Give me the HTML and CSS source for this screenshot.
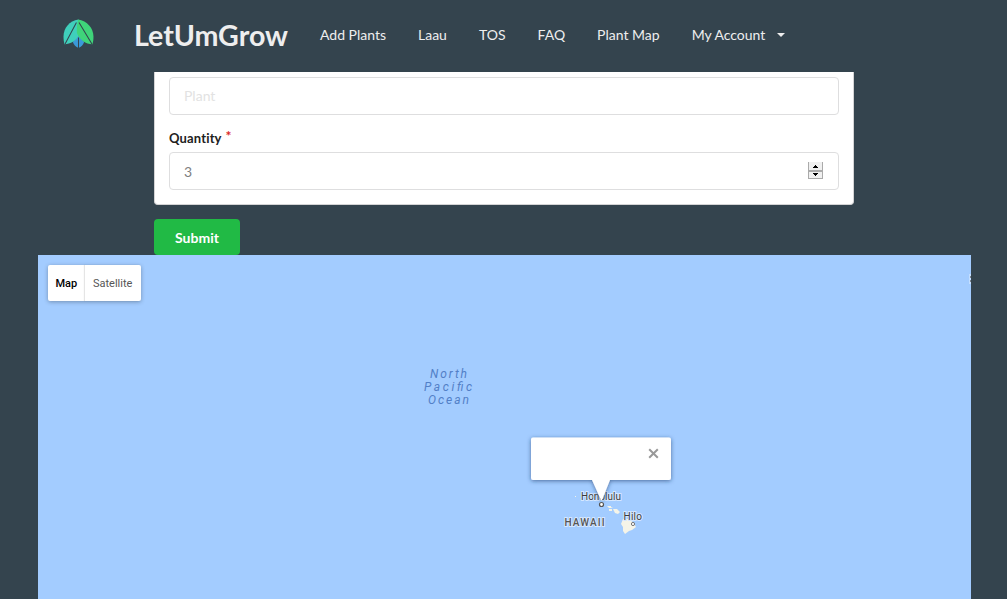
FILE: index.html
```html
<!DOCTYPE html>
<html lang="en">
<head>
<meta charset="utf-8">
<title>LetUmGrow</title>
<link rel="stylesheet" href="styles.css">
</head>
<body>
<header class="navbar">
  <svg class="logo" width="31" height="30" viewBox="0 0 30 30" preserveAspectRatio="none">
    <path fill="#3b99d8" d="M15 16 9.500 23c1 3 3 5 5.500 6 2.500-1 4.500-3 5.500-6z"/>
    <path fill="#3fcfbb" d="M15 .5C6 2 .5 9 .5 17.500c0 3 .3 5.500 1 7.800C7 25 13 22 16 15z"/>
    <path fill="#3fd47a" d="M14.500.5C23.500 2 29.500 9 29.500 17.500c0 3-.3 5.500-1 7.800C22 25 16 21 13.500 14c-.5-5 .5-9 1-13.500z"/>
    <path fill="none" stroke="#34444e" stroke-width="1" d="M13 3.500 2 25M15.500 3.500 28 25M15 18.500V29"/>
  </svg>
  <h1 class="brand">LetUmGrow</h1>
  <nav class="links">
    <a>Add Plants</a>
    <a>Laau</a>
    <a>TOS</a>
    <a>FAQ</a>
    <a>Plant Map</a>
    <a class="account">My Account <span class="caret"></span></a>
  </nav>
</header>
<main>
  <form class="form">
    <div class="segment">
      <div class="field placeholder">Plant</div>
      <div class="label">Quantity <span class="star">*</span></div>
      <div class="field quantity"><span>3</span>
        <svg class="spinner" width="15" height="17" viewBox="0 0 15 17" shape-rendering="crispEdges">
          <path fill="#f0f0f0" d="M0 0h15v17H0z"/>
          <path fill="#aaa" d="M0 0h1v17H0zM14 0h1v17h-1zM0 8h15v2H0zM0 16h15v1H0z"/>
          <path fill="#000" d="M7 3h1v1H7zM6 4h3v1H6zM5 5h5v1H5zM5 11h5v1H5zM6 12h3v1H6zM7 13h1v1H7z"/>
        </svg>
      </div>
    </div>
    <button class="submit" type="button">Submit</button>
  </form>
  <section class="map">
    <svg class="canvas" width="933" height="344" viewBox="0 0 933 344">
      <defs>
        <filter id="shade" x="-10%" y="-20%" width="120%" height="150%">
          <feDropShadow dx="0" dy="1" stdDeviation="2" flood-color="#1c3a6b" flood-opacity=".65"/>
        </filter>
      </defs>
      <g class="ocean">
        <text x="392" y="123" textLength="37">North</text>
        <text x="386" y="136" textLength="48">Pacific</text>
        <text x="390" y="149" textLength="41">Ocean</text>
      </g>
      <g fill="#f5f4e8">
        <path d="M569 251h4v1l2 1h-4zM571 254h3v2h-3zM575 254l4 0 3 3-2 2-3-1z"/>
        <path d="m585 264 5 0 5 3 3 5-4 3-3 1-4 3-2-3v-4l-2-3z"/>
        <path d="M537 241h1v1h-1z"/>
      </g>
      <g class="city">
        <text x="543" y="244.500" textLength="40">Honolulu</text>
        <text x="585.500" y="265" textLength="18.500">Hilo</text>
        <text class="state" x="526.500" y="270.500" textLength="40">HAWAII</text>
      </g>
      <g filter="url(#shade)">
        <path fill="#fff" d="M495 182.500h136q2 0 2 2v38.500q0 2-2 2h-59l-8 20h-1l-9-20h-59q-2 0-2-2v-38.500q0-2 2-2z"/>
      </g>
      <circle cx="563.500" cy="249.500" r="2" fill="#fff" stroke="#555" stroke-width="1.200"/>
      <circle cx="595" cy="269" r="1.600" fill="#fff" stroke="#777"/>
      <path fill="none" stroke="#999" stroke-width="2" d="m611.200 194.200 8.600 8.600m0-8.600-8.600 8.600"/>
      <path fill="#fff" d="M931 19h2v10h-2z" opacity=".35"/>
      <path fill="#7c858e" d="M932 21h1v2h-1zM932 25h1v2h-1z"/>
    </svg>
    <div class="types"><span class="active">Map</span><span class="satellite">Satellite</span></div>
  </section>
</main>
</body>
</html>
```
FILE: styles.css
```css
* { box-sizing: border-box; }
body {
  margin: 0;
  height: 599px;
  overflow: hidden;
  background: #34444e;
  font-family: Lato, sans-serif;
  font-size: 14px;
}
.navbar {
  display: flex;
  align-items: center;
  height: 72px;
  padding-left: 63px;
}
.logo { margin-top: -4px; flex: none; }
.brand {
  margin: -2px 0 0 40px;
  width: 154px;
  color: #eee;
  font-size: 28.600px;
  line-height: 36px;
  font-weight: 700;
  white-space: nowrap;
}
.links {
  display: flex;
  gap: 32px;
  margin: -4px 0 0 32px;
  color: #eee;
  font-size: 14px;
  white-space: nowrap;
}
.account { display: flex; align-items: center; }
.caret {
  margin: 2px 0 0 12px;
  border: 4px solid transparent;
  border-top: 4px solid #eee;
  border-bottom: 0;
}
.form { width: 700px; margin-left: 154px; }
.segment {
  height: 133px;
  padding: 5px 14px 0;
  background: #fff;
  border: 1px solid #d4d4d5;
  border-top: 0;
  border-radius: 0 0 4px 4px;
}
.field {
  display: flex;
  align-items: center;
  justify-content: space-between;
  height: 38px;
  padding: 0 14px 2px;
  border: 1px solid #dededf;
  border-radius: 4px;
}
.placeholder { color: #e2e2e2; }
.quantity { padding-right: 15px; color: #808080; }
.quantity span { padding-top: 2px; }
.label {
  height: 37px;
  padding-top: 13px;
  color: #212121;
  font-size: 13px;
  letter-spacing: .15px;
  line-height: 20px;
  font-weight: 700;
}
.star {
  margin-left: 1px;
  color: #db2828;
  font-size: 14px;
  line-height: 1;
  position: relative;
  top: -2px;
}
.submit {
  display: block;
  width: 86px;
  height: 36px;
  margin-top: 14px;
  padding: 0;
  border: 0;
  border-radius: 4px;
  background: #21ba45;
  color: #fff;
  font: 700 14px Lato, sans-serif;
}
.map {
  position: relative;
  width: 933px;
  height: 344px;
  margin-left: 38px;
  background: #a3ccff;
  font-family: Roboto, sans-serif;
}
.canvas { display: block; }
.ocean { fill: #527fc7; font-size: 12px; font-style: italic; }
.city {
  fill: #3c3c3c;
  stroke: #d5e7ff;
  stroke-width: 2px;
  paint-order: stroke;
  font-size: 10px;
}
.state { fill: #555; font-weight: 500; }
.types {
  position: absolute;
  left: 10px;
  top: 10px;
  display: flex;
  height: 36px;
  border-radius: 2px;
  background: #fff;
  box-shadow: 0 1px 4px rgba(0, 0, 0, .3);
  font-size: 11px;
  line-height: 37px;
}
.active { width: 37px; padding-left: 7.500px; font-weight: 500; color: #000; }
.satellite { width: 56px; padding-left: 8px; color: #565656; box-shadow: -1px 0 1px rgba(0, 0, 0, .1); }
```
